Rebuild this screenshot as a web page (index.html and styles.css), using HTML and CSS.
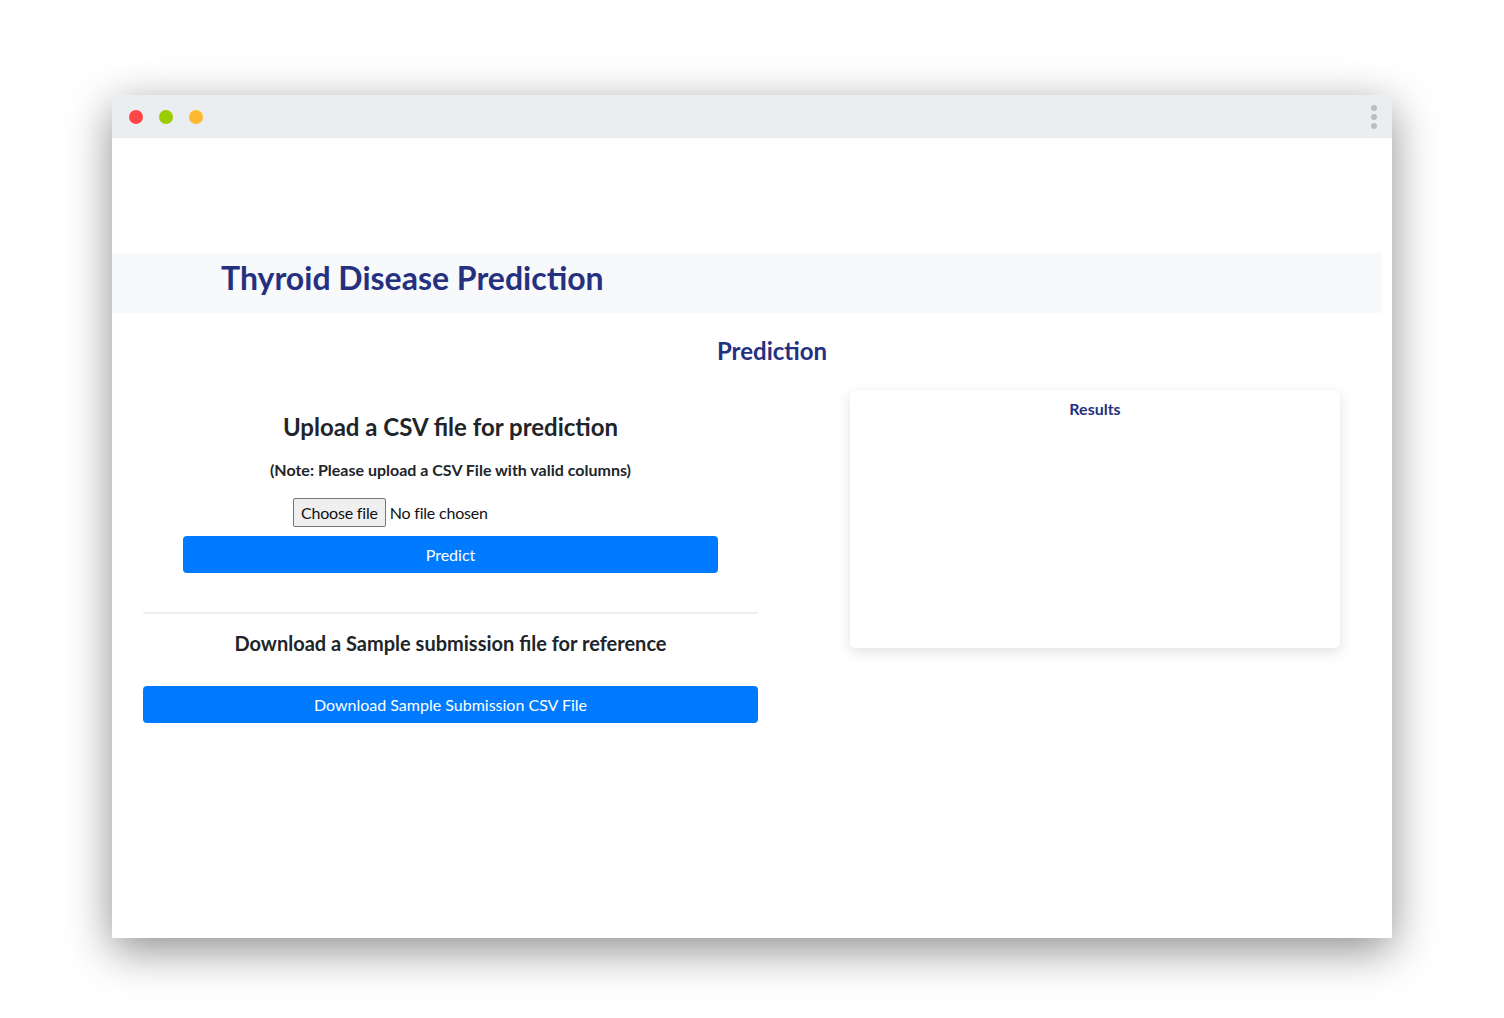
FILE: index.html
```html
<!DOCTYPE html>
<html lang="en">
<head>
<meta charset="utf-8">
<title>Thyroid Disease Prediction</title>
<link rel="stylesheet" href="styles.css">
</head>
<body>
<div class="window">
  <div class="titlebar">
    <div class="dots">
      <span class="dot red"></span>
      <span class="dot green"></span>
      <span class="dot yellow"></span>
    </div>
    <div class="kebab"><span></span><span></span><span></span></div>
  </div>
  <div class="content">
    <header class="band">
      <h1 class="brand">Thyroid Disease Prediction</h1>
    </header>
    <h2 class="section-title">Prediction</h2>
    <div class="row">
      <div class="left">
        <h3 class="upload-title">Upload a CSV file for prediction</h3>
        <p class="note">(Note: Please upload a CSV File with valid columns)</p>
        <div class="file-input">
          <span class="file-btn">Choose file</span>
          <span class="file-name">No file chosen</span>
        </div>
        <button class="btn predict">Predict</button>
        <hr class="divider">
        <h4 class="download-title">Download a Sample submission file for reference</h4>
        <button class="btn download">Download Sample Submission CSV File</button>
      </div>
      <div class="card">
        <div class="card-title">Results</div>
      </div>
    </div>
  </div>
</div>
</body>
</html>
```
FILE: styles.css
```css
* { box-sizing: border-box; }
html, body { margin: 0; padding: 0; background: #ffffff; }
body {
  width: 1504px;
  height: 1018px;
  padding: 95px 112px 0 112px;
  font-family: Lato, "Open Sans", sans-serif;
  color: #212529;
}
.window {
  width: 1280px;
  height: 843px;
  background: #ffffff;
  border-radius: 9px 9px 0 0;
  box-shadow: 0 12px 45px rgba(0,0,0,0.45);
  overflow: hidden;
  display: flex;
  flex-direction: column;
}
.titlebar {
  height: 43px;
  background: #ebeef0;
  display: flex;
  align-items: center;
  justify-content: space-between;
  padding: 0 15px 0 17px;
  flex: none;
}
.dots { display: flex; gap: 16px; }
.dot { width: 14px; height: 14px; border-radius: 50%; display: block; }
.red { background: #ff4646; }
.green { background: #9bcc00; }
.yellow { background: #ffb931; }
.kebab { display: flex; flex-direction: column; gap: 3px; }
.kebab span { width: 6px; height: 6px; border-radius: 50%; background: #b9bdc1; display: block; }
.content { flex: 1; padding-top: 115px; }
.band {
  background: #f8f9fa;
  height: 60px;
  margin-right: 10px;
  padding: 7px 0 0 109px;
}
.brand {
  margin: 0;
  font-size: 32px;
  line-height: 36px;
  font-weight: 700;
  color: #253180;
}
.section-title {
  margin: 24px 0 0 0;
  padding-left: 40px;
  text-align: center;
  font-size: 24px;
  font-weight: 700;
  color: #253180;
  line-height: 28px;
}
.row {
  display: flex;
  padding-left: 31px;
  margin-top: 25px;
  gap: 92px;
}
.left {
  width: 615px;
  display: flex;
  flex-direction: column;
  align-items: center;
}
.upload-title {
  margin: 22px 0 0 0;
  font-size: 24px;
  font-weight: 700;
  line-height: 30px;
}
.note {
  margin: 18px 0 0 0;
  font-size: 16px;
  font-weight: 700;
  line-height: 20px;
}
.file-input {
  align-self: flex-start;
  margin: 18px 0 0 150px;
  display: flex;
  align-items: center;
  font-size: 16px;
  letter-spacing: -0.2px;
}
.file-btn {
  display: inline-block;
  border: 1px solid #767676;
  background: #efefef;
  border-radius: 2px;
  padding: 0 7px;
  height: 29px;
  line-height: 27px;
  color: #111;
}
.file-name { margin-left: 4px; color: #111; }
.btn {
  border: none;
  border-radius: 4px;
  background: #007bff;
  color: #ffffff;
  font-family: Lato, "Open Sans", sans-serif;
  font-size: 16px;
  height: 37px;
  display: flex;
  align-items: center;
  justify-content: center;
}
.predict { width: 535px; margin-top: 9px; }
.divider {
  width: 100%;
  border: 0;
  border-top: 2px solid #eeeeee;
  margin: 39px 0 0 0;
}
.download-title {
  margin: 17px 0 0 0;
  font-size: 20px;
  font-weight: 700;
  line-height: 24px;
}
.download { width: 100%; margin-top: 31px; }
.card {
  width: 490px;
  height: 258px;
  background: #ffffff;
  border-radius: 5px;
  box-shadow: 0 4px 14px rgba(0,0,0,0.12);
  padding-top: 9px;
}
.card-title {
  text-align: center;
  font-size: 16px;
  font-weight: 700;
  color: #253180;
}
```
